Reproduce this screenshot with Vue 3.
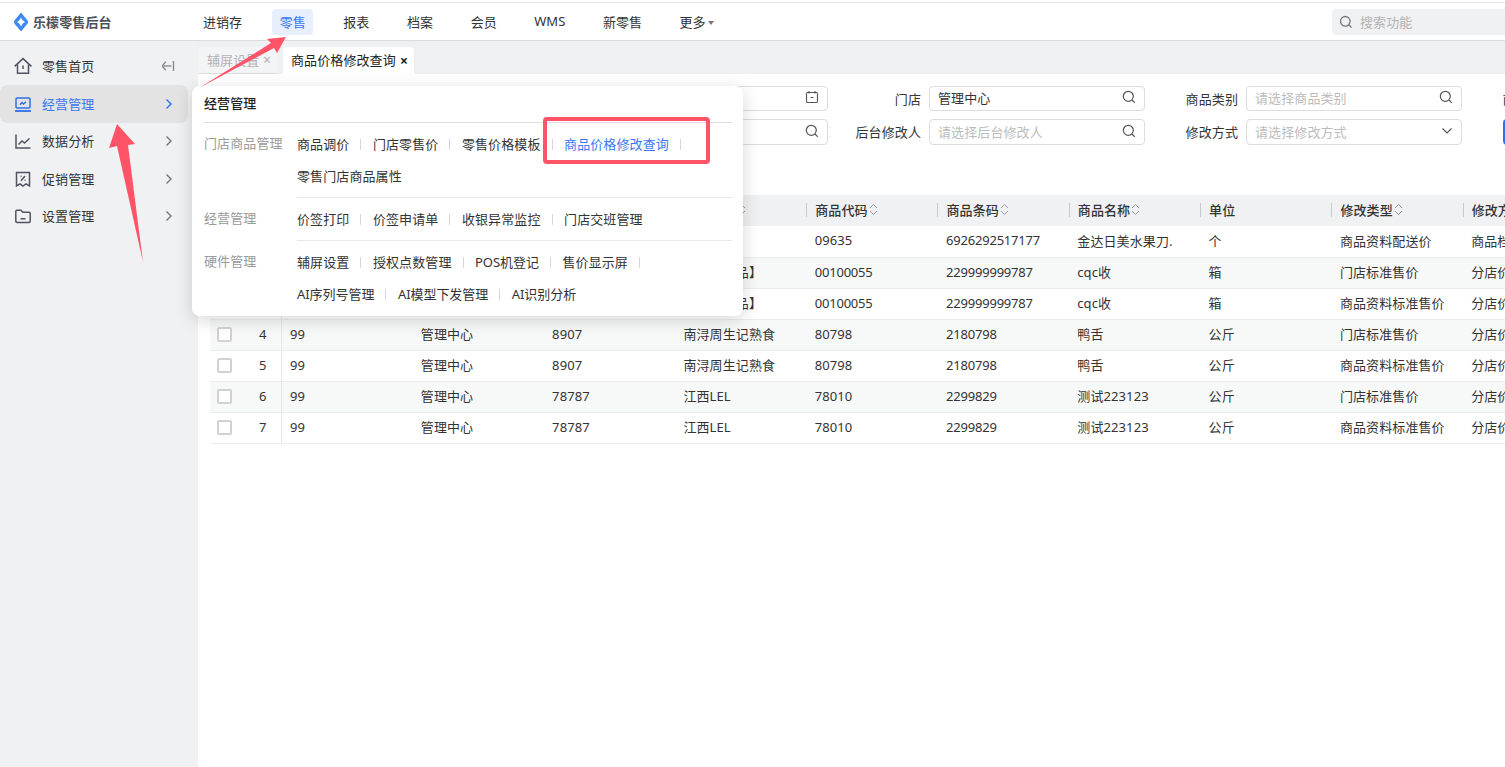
<script setup>
const navs = ['进销存', '零售', '报表', '档案', '会员', 'WMS', '新零售', '更多']
const side = [
  { t: '零售首页', k: 'home' },
  { t: '经营管理', k: 'biz', active: true },
  { t: '数据分析', k: 'chart' },
  { t: '促销管理', k: 'promo' },
  { t: '设置管理', k: 'folder' }
]
const heads = [
  ['门店代码', 1], ['门店名称', 1], ['商品分类', 1], ['分类名称', 1], ['商品代码', 1],
  ['商品条码', 1], ['商品名称', 1], ['单位', 0], ['修改类型', 1], ['修改方式', 0]
]
const rows = [
  ['99', '管理中心', '0101', '刀具', '09635', '6926292517177', '金达日美水果刀.', '个', '商品资料配送价', '商品档案修改'],
  ['99', '管理中心', '0202', '【总部商品】', '00100055', '229999999787', 'cqc收', '箱', '门店标准售价', '分店价格修改'],
  ['99', '管理中心', '0202', '【总部商品】', '00100055', '229999999787', 'cqc收', '箱', '商品资料标准售价', '分店价格修改'],
  ['99', '管理中心', '8907', '南浔周生记熟食', '80798', '2180798', '鸭舌', '公斤', '门店标准售价', '分店价格修改'],
  ['99', '管理中心', '8907', '南浔周生记熟食', '80798', '2180798', '鸭舌', '公斤', '商品资料标准售价', '分店价格修改'],
  ['99', '管理中心', '78787', '江西LEL', '78010', '2299829', '测试223123', '公斤', '门店标准售价', '分店价格修改'],
  ['99', '管理中心', '78787', '江西LEL', '78010', '2299829', '测试223123', '公斤', '商品资料标准售价', '分店价格修改']
]
const groups = [
  { label: '门店商品管理', lines: [
    [['商品调价', 1], ['门店零售价', 1], ['零售价格模板', 1], ['商品价格修改查询', 1, true]],
    [['零售门店商品属性', 0]]
  ] },
  { label: '经营管理', lines: [
    [['价签打印', 1], ['价签申请单', 1], ['收银异常监控', 1], ['门店交班管理', 0]]
  ] },
  { label: '硬件管理', lines: [
    [['辅屏设置', 1], ['授权点数管理', 1], ['POS机登记', 1], ['售价显示屏', 1]],
    [['AI序列号管理', 1], ['AI模型下发管理', 1], ['AI识别分析', 0]]
  ] }
]
const isNum = (v) => /^\d{6,}$/.test(v)
const isLatin = (v) => /^[A-Z]/.test(v)
</script>

<template>
  <div class="root">
    <div class="strip"></div>
    <header class="top">
      <div class="logo">
        <svg class="logo-mark" viewBox="0 0 14 20" width="14" height="20">
          <path d="M7 .5 L13.6 8.6 Q14.4 10 13.6 11.4 L7 19.5 L.4 11.4 Q-.4 10 .4 8.6 Z" fill="#3d8bf2" />
          <path d="M7 5.5 Q8 8.8 11 10 Q8 11.2 7 14.5 Q6 11.2 3 10 Q6 8.8 7 5.5Z" fill="#fff" />
        </svg>
        <span class="logo-text">乐檬零售后台</span>
      </div>
      <nav class="nav">
        <span v-for="n in navs" :key="n" class="nav-item" :class="{ on: n === '零售' }">
          {{ n }}<i v-if="n === '更多'" class="caret"></i>
        </span>
      </nav>
      <div class="top-search">
        <svg width="14" height="14" viewBox="0 0 14 14" fill="none" stroke="#777" stroke-width="1.3">
          <circle cx="6.3" cy="6.3" r="4.8" /><path d="M10 10l2.6 2.6" />
        </svg>
        <span>搜索功能</span>
      </div>
    </header>

    <div class="body">
      <aside class="side">
        <div v-for="(s, i) in side" :key="s.t" class="side-item" :class="{ active: s.active }">
          <svg class="side-icon" width="18" height="18" viewBox="0 0 18 18" fill="none" :stroke="s.active ? '#2f6fed' : '#50545f'" stroke-width="1.5">
            <template v-if="s.k === 'home'">
              <path d="M.6 9.4 L9 1.6 L17.4 9.4" /><path d="M3.5 7.5V16.2H14.5V7.5" /><path d="M9 8.5v3.5" />
            </template>
            <template v-else-if="s.k === 'biz'">
              <rect x="2" y="3" width="14" height="10" rx="1" /><path d="M1 16h16" stroke-width="1.8" /><path d="M6 9.8 L8 7.5 L9.5 9 L12 6.8" />
            </template>
            <template v-else-if="s.k === 'chart'">
              <path d="M2 2.5V16H16.5" /><path d="M4.5 12.5 L8 9 L10.5 11 L15.5 6.5" />
            </template>
            <template v-else-if="s.k === 'promo'">
              <path d="M2.5 2.5H15.5V16L12 13.8 L9 16 L6 13.8 L2.5 16Z" /><path d="M11 6 L7 10.8" /><path d="M6.5 6.2h1M10.5 10.3h1" />
            </template>
            <template v-else>
              <path d="M1.8 4.5A1.2 1.2 0 0 1 3 3.3H7L8.8 5.2H15A1.2 1.2 0 0 1 16.2 6.4V14.3A1.2 1.2 0 0 1 15 15.5H3A1.2 1.2 0 0 1 1.8 14.3Z" /><path d="M6.5 11.8h5" />
            </template>
          </svg>
          <span class="side-text">{{ s.t }}</span>
          <svg v-if="i === 0" class="side-end" width="14" height="12" viewBox="0 0 14 12" fill="none" stroke="#8a8d94" stroke-width="1.4">
            <path d="M3.8 1.8 L0 6 L3.8 10.2" /><path d="M0 6H9.5" /><path d="M11.5 1V11" />
          </svg>
          <svg v-else class="side-end" width="14" height="12" viewBox="0 0 14 12" fill="none" :stroke="s.active ? '#2f6fed' : '#777'" stroke-width="1.4">
            <path d="M4.5 1.5 L9 6 L4.5 10.5" />
          </svg>
        </div>
      </aside>

      <main class="main">
        <div class="tabs">
          <div class="tab off"><span class="tab-t">辅屏设置</span><span class="x">×</span></div>
          <div class="tab cur"><span class="tab-t">商品价格修改查询</span><span class="x">×</span></div>
        </div>

        <div class="filters">
          <div class="cell wide">
            <label>修改日期</label>
            <div class="inp up"><em>2024-01-01</em>
              <svg width="14" height="14" viewBox="0 0 14 14" fill="none" stroke="#555" stroke-width="1.1">
                <rect x="1.5" y="2.5" width="11" height="10" rx="1.2" /><path d="M4 1v2.4M10 1v2.4M5.5 7.5h3" />
              </svg>
            </div>
          </div>
          <div class="cell">
            <label>门店</label>
            <div class="inp up"><em>管理中心</em>
              <svg width="14" height="14" viewBox="0 0 14 14" fill="none" stroke="#555" stroke-width="1.2"><circle cx="6.3" cy="6.3" r="5" /><path d="M10 10l2.8 2.8" /></svg>
            </div>
          </div>
          <div class="cell">
            <label>商品类别</label>
            <div class="inp up"><b>请选择商品类别</b>
              <svg width="14" height="14" viewBox="0 0 14 14" fill="none" stroke="#555" stroke-width="1.2"><circle cx="6.3" cy="6.3" r="5" /><path d="M10 10l2.8 2.8" /></svg>
            </div>
          </div>
          <div class="cell"><label>商品名称</label><div class="inp"></div></div>

          <div class="cell wide">
            <label>商品</label>
            <div class="inp"><b>请选择商品</b>
              <svg width="14" height="14" viewBox="0 0 14 14" fill="none" stroke="#555" stroke-width="1.2"><circle cx="6.3" cy="6.3" r="5" /><path d="M10 10l2.8 2.8" /></svg>
            </div>
          </div>
          <div class="cell">
            <label>后台修改人</label>
            <div class="inp"><b>请选择后台修改人</b>
              <svg width="14" height="14" viewBox="0 0 14 14" fill="none" stroke="#555" stroke-width="1.2"><circle cx="6.3" cy="6.3" r="5" /><path d="M10 10l2.8 2.8" /></svg>
            </div>
          </div>
          <div class="cell">
            <label>修改方式</label>
            <div class="inp"><b>请选择修改方式</b>
              <svg width="12" height="8" viewBox="0 0 12 8" fill="none" stroke="#555" stroke-width="1.2"><path d="M1.5 1.5 L6 6 L10.5 1.5" /></svg>
            </div>
          </div>
          <div class="cell btn-cell"><button class="query">查询</button></div>
        </div>

        <table class="grid">
          <colgroup>
            <col class="c-check" /><col class="c-seq" />
            <col v-for="h in heads" :key="h[0]" class="c-data" />
          </colgroup>
          <thead>
            <tr>
              <th><span class="box"></span></th>
              <th class="seq">序号</th>
              <th v-for="h in heads" :key="h[0]">
                <div class="th-in">
                  <i class="sep"></i>{{ h[0] }}
                  <svg v-if="h[1]" class="sort" width="9" height="13" viewBox="0 0 9 13" fill="none" stroke="#9a9da3" stroke-width="1">
                    <path d="M1 5 L4.5 1.5 L8 5" /><path d="M1 8 L4.5 11.5 L8 8" />
                  </svg>
                </div>
              </th>
            </tr>
          </thead>
          <tbody>
            <tr v-for="(r, i) in rows" :key="i" :class="{ tint: i % 2 === 1 }">
              <td class="chk"><span class="box"></span></td>
              <td class="seq">{{ i + 1 }}</td>
              <td v-for="(v, j) in r" :key="j" :class="{ num: isNum(v) }">{{ v }}</td>
            </tr>
          </tbody>
        </table>
      </main>
    </div>

    <section class="pop">
      <div class="pop-title">经营管理</div>
      <div v-for="g in groups" :key="g.label" class="pop-group">
        <div class="pop-label">{{ g.label }}</div>
        <div class="pop-items">
          <div v-for="(l, li) in g.lines" :key="li" class="pop-line">
            <span v-for="it in l" :key="it[0]" class="pop-it" :class="{ blue: it[2], last: !it[1], latin: isLatin(it[0]) }">{{ it[0] }}</span>
          </div>
        </div>
      </div>
    </section>
    <div class="mark"></div>

    <svg class="arrows" width="1505" height="767" viewBox="0 0 1505 767">
      <polygon points="286,37 267,39 271,43 199,88 274,48 277,53" fill="#ff5468" />
      <polygon points="117,124 135,144 128,145 143,262 117,146 109,148" fill="#ff5468" />
    </svg>
  </div>
</template>

<style scoped>
.root {
  position: relative;
  width: 1505px;
  height: 767px;
  overflow: hidden;
  background: #fff;
  color: #333;
  font-family: "Noto Sans", "Noto Sans CJK SC", sans-serif;
  font-size: 13px;
  letter-spacing: 0.1px;
}
.strip { height: 2px; background: #fff; }
.top {
  display: flex;
  align-items: center;
  height: 36px;
  padding-top: 1px;
  border-top: 1px solid #e3e3e3;
  border-bottom: 1px solid #dcdcdc;
  box-sizing: content-box;
}
.logo { display: flex; align-items: center; width: 195.5px; padding-left: 14px; padding-bottom: 1px; box-sizing: border-box; }
.logo-mark { flex: none; }
.logo-text { margin-left: 5px; padding-bottom: 1px; font-weight: 700; color: #4d5058; }
.nav { display: flex; gap: 22.65px; flex: 1; letter-spacing: 0; }
.nav-item {
  display: flex;
  align-items: center;
  height: 26px;
  padding: 0 7.5px 2px;
  box-sizing: border-box;
  border-radius: 4px;
  color: #333;
  white-space: nowrap;
}
.nav-item.on { background: #e8effc; color: #3b78f0; }
.caret {
  width: 0;
  height: 0;
  margin: 3px 0 0 2px;
  border: 3.5px solid transparent;
  border-top: 4px solid #777;
  border-bottom: 0;
}
.top-search {
  display: flex;
  align-items: center;
  gap: 7px;
  width: 173px;
  height: 26px;
  padding-left: 7px;
  box-sizing: border-box;
  background: #f0f1f3;
  border-radius: 4px 0 0 4px;
  color: #b4b4b4;
}
.top-search span { padding-bottom: 2px; }

.body { display: flex; height: 726px; }
.side {
  flex: none;
  width: 198px;
  padding: 6.5px 10px 0 0;
  box-sizing: border-box;
  background: #f0f1f3;
}
.side-item {
  display: flex;
  align-items: center;
  height: 37.5px;
  padding-left: 14px;
  border-radius: 8px;
  color: #333;
}
.side-item.active { background: #e3e3e4; color: #3b78f0; }
.side-icon { flex: none; }
.side-text { margin-left: 10px; flex: 1; padding-bottom: 1px; }
.side-end { flex: none; margin-right: 12px; }

.main { flex: 1; min-width: 0; overflow: hidden; }
.tabs {
  display: flex;
  align-items: flex-end;
  gap: 6px;
  height: 33px;
  padding-left: 1px;
  background: #eff0f2;
}
.tab {
  display: flex;
  flex: none;
  align-items: center;
  justify-content: space-between;
  height: 27px;
  padding: 0 6px 2px 8px;
  border-radius: 4px 4px 0 0;
  box-sizing: border-box;
  white-space: nowrap;
}
.tab .x { flex: none; padding-top: 2px; font-size: 14px; line-height: 1; }
.tab.off { width: 78px; background: #f3f4f5; color: #b3b3b3; border-bottom: 1px solid #dcdcdc; }
.tab.cur { width: 131px; background: #fff; color: #222; }
.tab.cur .x { color: #222; font-weight: 700; }

.filters {
  display: grid;
  grid-template-columns: 630px 316.5px 317px 317px;
  grid-template-rows: 25px 26px;
  row-gap: 8px;
  padding-top: 12px;
  width: 1581px;
}
.cell { display: flex; align-items: center; justify-content: flex-end; gap: 8px; }
.cell label { white-space: nowrap; color: #333; padding-bottom: 1px; }
.inp {
  flex: none;
  display: flex;
  align-items: center;
  justify-content: space-between;
  width: 215.5px;
  height: 100%;
  padding: 0 8px 2px 8px;
  box-sizing: border-box;
  border: 1px solid #dcdcdc;
  border-radius: 4px;
}
.inp.up { padding-bottom: 3px; }
.inp em { font-style: normal; color: #333; }
.inp b { font-weight: 400; color: #bcbcbc; }
.btn-cell { justify-content: flex-start; padding-left: 41px; }
.query {
  width: 70px;
  height: 26px;
  border: 0;
  border-radius: 4px;
  background: #2f6fed;
  color: #fff;
  font: inherit;
}

.grid {
  margin: 50px 0 0 12px;
  width: 1384px;
  border-collapse: collapse;
  table-layout: fixed;
}
.c-check { width: 35px; }
.c-seq { width: 36px; }
.c-data { width: 131.3px; }
.grid th {
  height: 31px;
  padding: 0;
  background: #f0f1f3;
  font-weight: 500;
  text-align: left;
  color: #333;
  white-space: nowrap;
}
.grid th.seq { text-align: center; }
.th-in { display: flex; align-items: center; height: 31px; padding-bottom: 2px; box-sizing: border-box; }
.sep { flex: none; width: 1px; height: 14px; margin-right: 8px; background: #c8c9cc; }
.sort { flex: none; margin-left: 1px; }
.grid td {
  height: 31px;
  box-sizing: border-box;
  padding: 0 0 2px 8.5px;
  border-bottom: 1px solid #ececec;
  white-space: nowrap;
  overflow: hidden;
  color: #333;
}
.grid td.num { letter-spacing: -0.2px; }
.grid .tint td { background: #f7f9f8; }
.grid td.seq { text-align: center; padding: 0 0 2px; border-right: 1px solid #e8e8e8; }
.grid td.chk { padding: 0 0 0 7px; }
.box {
  display: block;
  width: 15px;
  height: 15px;
  box-sizing: border-box;
  margin-left: 7px;
  border: 2px solid #d2d2d2;
  border-radius: 2px;
  background: #fff;
}
.grid td.chk .box { margin-left: 0; }

.pop {
  position: absolute;
  left: 192px;
  top: 86px;
  width: 551px;
  height: 230px;
  padding: 0 11px 0 12px;
  box-sizing: border-box;
  background: #fff;
  border-radius: 8px;
  box-shadow: 0 4px 18px rgba(0, 0, 0, 0.16);
}
.pop-title {
  height: 36px;
  line-height: 35px;
  border-bottom: 1px solid #dedede;
  font-weight: 500;
  color: #222;
}
.pop-group { display: flex; }
.pop-label { flex: none; width: 93px; padding-top: 4px; line-height: 32px; color: #9a9a9a; }
.pop-items { flex: 1; padding: 5px 0; border-bottom: 1px solid #e8e8e8; }
.pop-group:last-child .pop-items { border-bottom: 0; }
.pop-line { display: flex; height: 32px; align-items: center; padding-bottom: 2px; box-sizing: border-box; }
.pop-it { position: relative; margin-right: 23.5px; white-space: nowrap; color: #333; }
.pop-it.latin { letter-spacing: -0.05px; }
.pop-it::after {
  content: "";
  position: absolute;
  right: -12px;
  top: 50%;
  width: 1px;
  height: 11px;
  margin-top: -4px;
  background: #d6d6d6;
}
.pop-it.last::after { display: none; }
.pop-it.blue { color: #3b78f0; }
.mark {
  position: absolute;
  left: 543px;
  top: 117px;
  width: 167px;
  height: 47px;
  box-sizing: border-box;
  border: 4px solid #ff5468;
  border-radius: 4px;
}
.arrows { position: absolute; left: 0; top: 0; pointer-events: none; }
</style>

<style>
html, body { margin: 0; overflow: hidden; }
</style>
